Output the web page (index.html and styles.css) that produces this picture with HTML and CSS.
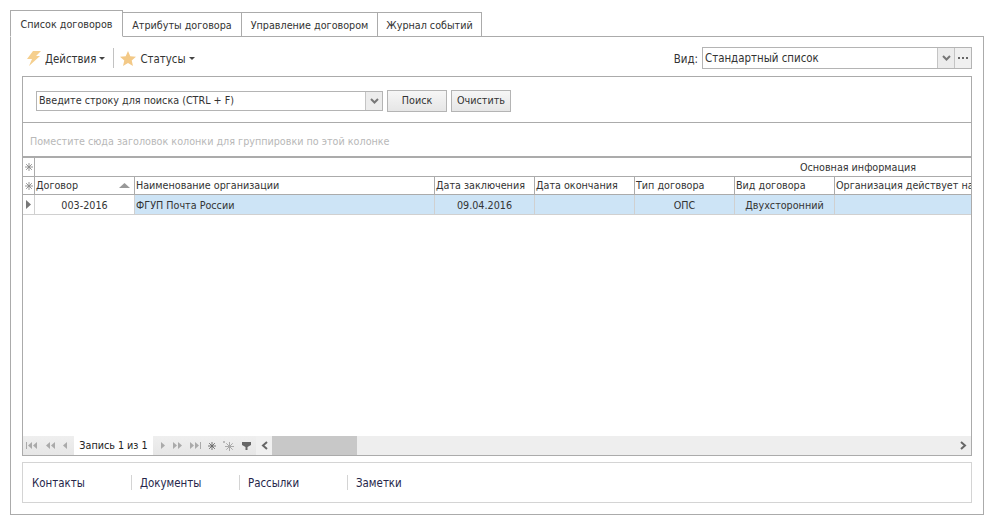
FILE: index.html
```html
<!DOCTYPE html>
<html lang="ru">
<head>
<meta charset="utf-8">
<title>Список договоров</title>
<link rel="stylesheet" href="styles.css">
</head>
<body>
<div class="app">
  <div class="tabs">
    <div class="tab active">Список договоров</div>
    <div class="tab t2">Атрибуты договора</div>
    <div class="tab t3">Управление договором</div>
    <div class="tab t4">Журнал событий</div>
  </div>
  <div class="panel">
    <div class="toolbar">
      <div class="tool">
        <svg class="bolt" width="14" height="15" viewBox="0 0 14 15"><path d="M6 0h8L9 5h4L2 15l3-7H0z" fill="#f5cf8e"/></svg>
        <span>Действия</span><i class="caret"></i>
      </div>
      <div class="tsep"></div>
      <div class="tool">
        <svg class="star" width="16" height="15" viewBox="0 0 16 15"><path d="M8 0l2.300 5.200 5.700.5-4.300 3.800 1.300 5.500L8 12l-5 3 1.300-5.500L0 5.700l5.700-.5z" fill="#f3c987"/></svg>
        <span>Статусы</span><i class="caret"></i>
      </div>
      <div class="spacer"></div>
      <span class="view-label">Вид:</span>
      <div class="view-select">
        <span class="view-value">Стандартный список</span>
        <div class="combo-btn"><svg width="9" height="6" viewBox="0 0 9 6"><path d="M1 1l3.500 3.500L8 1" fill="none" stroke="#777" stroke-width="2"/></svg></div>
        <div class="combo-btn more"><svg width="11" height="2" viewBox="0 0 11 2"><path d="M0 0h2v2H0zM4 0h2v2H4zM8 0h2v2H8z" fill="#666"/></svg></div>
      </div>
    </div>
    <div class="box">
      <div class="search">
        <div class="search-input">
          <span class="search-text">Введите строку для поиска (CTRL + F)</span>
          <div class="combo-btn"><svg width="9" height="6" viewBox="0 0 9 6"><path d="M1 1l3.500 3.500L8 1" fill="none" stroke="#777" stroke-width="2"/></svg></div>
        </div>
        <div class="btn b-find">Поиск</div>
        <div class="btn b-clear">Очистить</div>
      </div>
      <div class="group">Поместите сюда заголовок колонки для группировки по этой колонке</div>
      <div class="grid">
        <div class="band">
          <div class="ind"><svg width="8" height="8" viewBox="0 0 9 9"><use href="#aster"/></svg></div>
          <div class="band-title">Основная информация</div>
        </div>
        <div class="head">
          <div class="ind"><svg width="8" height="8" viewBox="0 0 9 9"><use href="#aster"/></svg></div>
          <div class="hc c1">Договор<svg class="sort" width="11" height="5" viewBox="0 0 11 5"><path d="M5.500 0L11 5H0z" fill="#999"/></svg></div>
          <div class="hc c2">Наименование организации</div>
          <div class="hc c3">Дата заключения</div>
          <div class="hc c3">Дата окончания</div>
          <div class="hc c3">Тип договора</div>
          <div class="hc c3">Вид договора</div>
          <div class="hc c4">Организация действует на основании</div>
        </div>
        <div class="row">
          <div class="ind"><svg width="5" height="9" viewBox="0 0 5 9"><path d="M0 0l5 4.500L0 9z" fill="#777"/></svg></div>
          <div class="cell c1 first center">003-2016</div>
          <div class="cell c2">ФГУП Почта России</div>
          <div class="cell c3 center">09.04.2016</div>
          <div class="cell c3"></div>
          <div class="cell c3 center">ОПС</div>
          <div class="cell c3 center">Двухсторонний</div>
          <div class="cell c4"></div>
        </div>
        <div class="grid-empty"></div>
        <div class="nav">
          <div class="nav-icons left">
            <svg width="11" height="7" viewBox="0 0 11 7"><path d="M0 0h1v7H0zM6 0v7L2 3.500zM11 0v7L7 3.500z" fill="#aaa"/></svg>
            <svg width="10" height="7" viewBox="0 0 10 7"><path d="M5 0v7L1 3.500zM10 0v7L6 3.500z" fill="#aaa"/></svg>
            <svg width="5" height="7" viewBox="0 0 5 7"><path d="M4 0v7L0 3.500z" fill="#aaa"/></svg>
          </div>
          <div class="record">Запись 1 из 1</div>
          <div class="nav-icons right">
            <svg width="5" height="7" viewBox="0 0 5 7"><path d="M0 0v7l4-3.500z" fill="#aaa"/></svg>
            <svg width="10" height="7" viewBox="0 0 10 7"><path d="M0 0v7l4-3.500zM5 0v7l4-3.500z" fill="#aaa"/></svg>
            <svg width="11" height="7" viewBox="0 0 11 7"><path d="M0 0v7l4-3.500zM5 0v7l4-3.500zM10 0h1v7h-1z" fill="#aaa"/></svg>
            <svg class="a-dark" width="8" height="8" viewBox="0 0 9 9"><use href="#aster"/></svg>
            <svg class="a-light" width="11" height="10" viewBox="0 0 11 10"><path d="M1 0v2M0 1h2" stroke="#aaa"/><g transform="translate(2 1)"><use href="#aster"/></g></svg>
            <svg class="funnel" width="9" height="8" viewBox="0 0 9 8"><path d="M0 0h9v3L5.500 5v3h-2V5L0 3z" fill="#666"/></svg>
          </div>
          <div class="sb-btn"><svg width="7" height="9" viewBox="0 0 7 9"><path d="M6 1L2 4.500 6 8" fill="none" stroke="#666" stroke-width="2"/></svg></div>
          <div class="sb-thumb"></div>
          <div class="sb-track"></div>
          <div class="sb-btn end"><svg width="7" height="9" viewBox="0 0 7 9"><path d="M1 1l4 3.500L1 8" fill="none" stroke="#666" stroke-width="2"/></svg></div>
        </div>
      </div>
    </div>
    <div class="links">
      <div class="link">Контакты</div>
      <div class="link">Документы</div>
      <div class="link">Рассылки</div>
      <div class="link">Заметки</div>
    </div>
  </div>
</div>
<svg class="defs" width="0" height="0">
  <symbol id="aster" viewBox="0 0 9 9" width="9" height="9">
    <path d="M4.500 0v9M0 4.500h9M1.300 1.300l6.400 6.400M7.700 1.300L1.300 7.700" stroke="currentColor" stroke-width="1" fill="none"/>
  </symbol>
</svg>
</body>
</html>
```
FILE: styles.css
```css
* { box-sizing: border-box; }
html, body { margin: 0; padding: 0; background: #fff; }
body {
  width: 994px;
  height: 525px;
  overflow: hidden;
  font-family: "DejaVu Sans Condensed", "DejaVu Sans", sans-serif;
  font-stretch: condensed;
  font-size: 10.700px;
  color: #333;
}
.defs { display: block; height: 0; }
.app { padding: 10px 10px 0; }

.tabs { display: flex; align-items: flex-end; height: 27px; margin-bottom: -1px; position: relative; }
.tab {
  height: 25px;
  line-height: 25px;
  border: 1px solid #ababab;
  border-left: 0;
  text-align: center;
  background: #fff;
  white-space: nowrap;
}
.tab.active {
  width: 113px;
  height: 27px;
  line-height: 28px;
  border-left: 1px solid #ababab;
  border-bottom-color: #fff;
}
.t2 { width: 119px; }
.t3 { width: 136px; }
.t4 { width: 104px; }

.panel {
  width: 974px;
  height: 479px;
  border: 1px solid #ababab;
  padding: 0 11px;
  display: flex;
  flex-direction: column;
}

.toolbar { display: flex; align-items: center; height: 39px; padding: 3px 0 0 5px; flex: none; }
.tool { display: flex; align-items: center; font-size: 11.400px; }
.tool span { padding-top: 1px; }
.bolt { margin-right: 4px; }
.star { margin-right: 4px; }
.caret {
  width: 0; height: 0;
  margin-left: 3px;
  border-left: 3px solid transparent;
  border-right: 3px solid transparent;
  border-top: 3px solid #444;
}
.tsep { width: 1px; height: 20px; background: #c2c2c2; margin: 0 6px 0 8px; }
.spacer { flex: 1; }
.view-label { margin-right: 4px; font-size: 11.400px; padding-top: 1px; }
.view-select {
  display: flex;
  width: 270px;
  height: 22px;
  border: 1px solid #b4b4b4;
  background: #fff;
  align-items: stretch;
}
.view-value { flex: 1; line-height: 21px; padding-left: 2px; font-size: 11.400px; }
.combo-btn {
  width: 17px;
  background: #ececec;
  border-left: 1px solid #c4c4c4;
  display: flex;
  align-items: center;
  justify-content: center;
  flex: none;
}
.combo-btn.more { background: #f0f0f0; }

.box {
  height: 380px;
  border: 1px solid #ababab;
  display: flex;
  flex-direction: column;
  overflow: hidden;
  flex: none;
}
.search {
  display: flex;
  align-items: flex-end;
  height: 46px;
  border-bottom: 1px solid #ababab;
  padding: 0 0 11px 13px;
  flex: none;
}
.search-input {
  display: flex;
  width: 347px;
  height: 20px;
  border: 1px solid #b4b4b4;
  align-items: stretch;
  margin-right: 4px;
}
.search-text { flex: 1; line-height: 17px; padding-left: 2px; }
.btn {
  height: 22px;
  line-height: 20px;
  border: 1px solid #b4b4b4;
  background: linear-gradient(#f6f6f6, #e6e6e6);
  text-align: center;
  margin-bottom: -1px;
}
.b-find { width: 60px; margin-right: 4px; }
.b-clear { width: 60px; }

.group {
  height: 35px;
  line-height: 37px;
  padding-left: 7px;
  color: #b8b8b8;
  border-bottom: 2px solid #ababab;
  flex: none;
}

.grid { flex: 1; display: flex; flex-direction: column; min-height: 0; }
.ind {
  width: 12px;
  flex: none;
  display: flex;
  align-items: center;
  justify-content: center;
  color: #888;
  border-right: 1px solid #ababab;
}
.band { display: flex; height: 19px; flex: none; border-bottom: 1px solid #ababab; }
.band-title { width: 1646px; flex: none; text-align: center; line-height: 20px; }
.head { display: flex; height: 18px; flex: none; border-bottom: 1px solid #ababab; }
.hc {
  flex: none;
  line-height: 18px;
  padding-left: 1px;
  border-right: 1px solid #ababab;
  white-space: nowrap;
  overflow: hidden;
  display: flex;
  align-items: center;
  justify-content: space-between;
}
.c1 { width: 100px; }
.c2 { width: 300px; }
.c3 { width: 100px; }
.c4 { width: 300px; }
.sort { margin-right: 4px; }
.row { display: flex; height: 20px; flex: none; border-bottom: 1px solid #d0d0d0; background: #cde4f6; }
.row .ind { background: #fff; border-right-color: #d0d0d0; }
.cell {
  flex: none;
  line-height: 21px;
  padding-left: 1px;
  border-right: 1px solid #d0d0d0;
  white-space: nowrap;
}
.cell.center { text-align: center; padding-left: 0; }
.cell.first { background: #fff; }
.grid-empty { flex: 1; }

.nav { display: flex; height: 19px; flex: none; align-items: stretch; background: #eee; }
.nav-icons {
  display: flex;
  align-items: center;
  background: linear-gradient(#efefef, #e6e6e6);
}
.nav-icons.left { width: 51px; padding-left: 3px; gap: 8px; }
.nav-icons.right { width: 103px; padding-left: 8px; gap: 7px; }
.a-dark { color: #666; }
.a-light { color: #aaa; }
.funnel { margin-left: 1px; }
.record { width: 79px; background: #fff; text-align: center; line-height: 19px; color: #222; white-space: nowrap; }
.sb-btn { width: 16px; display: flex; align-items: center; justify-content: center; background: #f0f0f0; flex: none; }
.sb-thumb { width: 85px; background: #c8c8c8; flex: none; }
.sb-track { flex: 1; background: #eee; }
.sb-btn.end { background: #eee; }

.links {
  margin-top: 6px;
  height: 41px;
  border: 1px solid #d4d4d4;
  display: flex;
  align-items: center;
  flex: none;
}
.link {
  width: 108px;
  height: 15px;
  line-height: 16px;
  padding-left: 8px;
  color: #26264a;
  font-size: 11.400px;
  border-left: 1px solid #d4d4d4;
}
.link:first-child { border-left: 0; padding-left: 9px; }
```
